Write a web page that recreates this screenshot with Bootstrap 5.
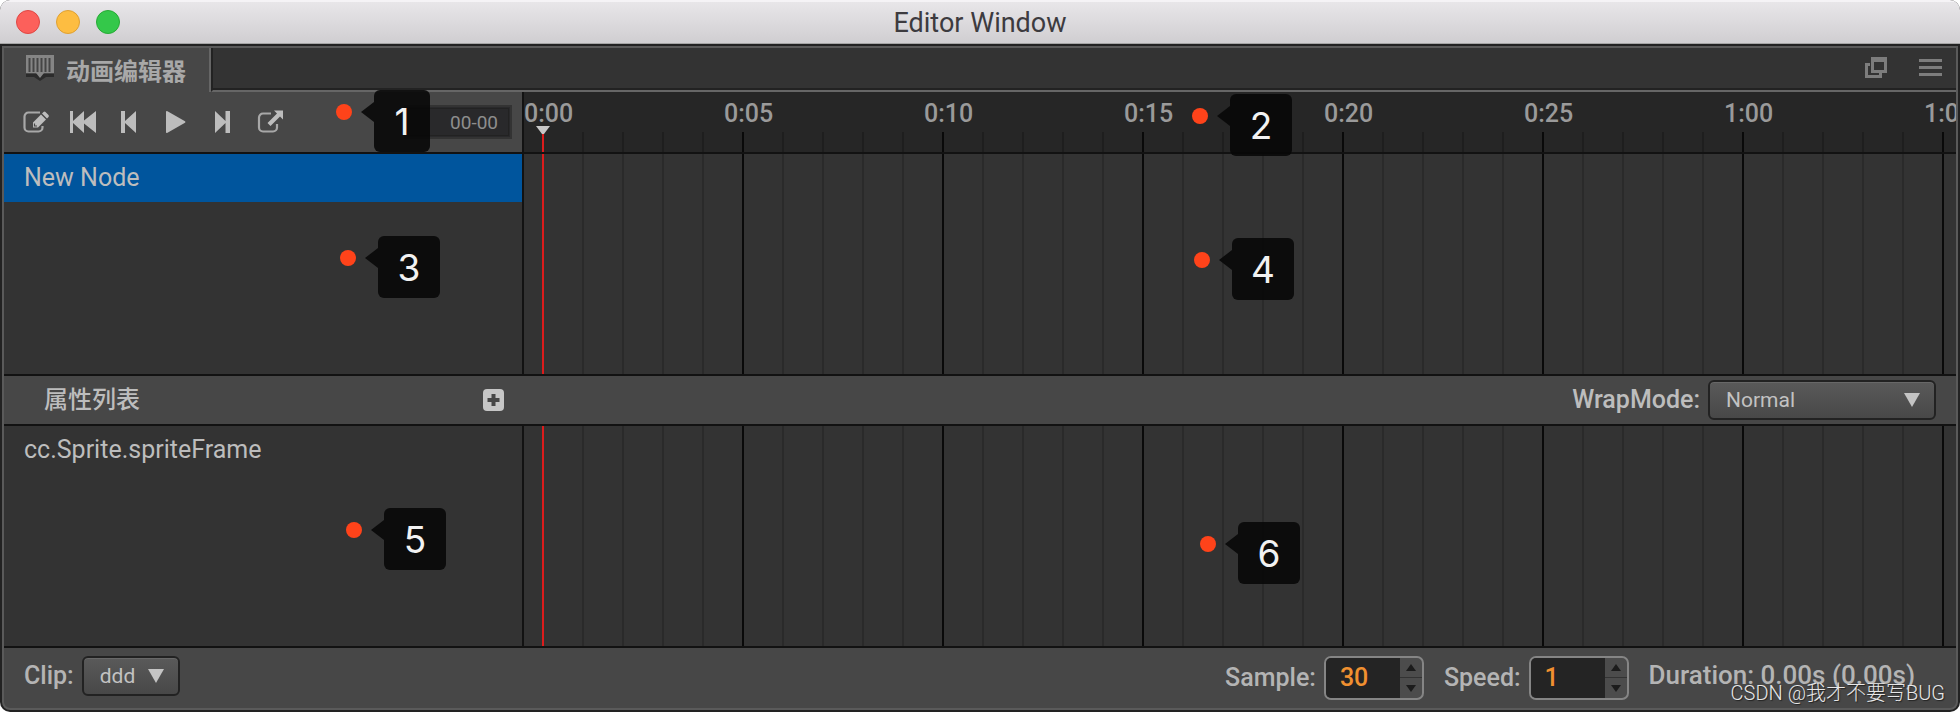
<!DOCTYPE html>
<html lang="zh-CN">
<head>
<meta charset="utf-8">
<meta name="viewport" content="width=device-width, initial-scale=1">
<title>Editor Window</title>
<link href="https://cdn.jsdelivr.net/npm/bootstrap@5.3.0/dist/css/bootstrap.min.css" rel="stylesheet">
<style>
  :root { --panel: #474747; --pane: #333; --ruler: #262626; --line: #121212; --edge: #5a5a5a; --ink: #bdbdbd; }
  body { font-family: Roboto, "Noto Sans CJK SC", sans-serif; font-size: 25px; line-height: 30px; color: var(--ink); background: #fff; }
  .window { min-height: 100vh; border-radius: 10px; overflow: hidden; background: #222; }
  .titlebar { height: 44px; background: linear-gradient(#e8e6e9, #d0ced1); border-top: 2px solid #f5f3f6; border-bottom: 1px solid #a5a5a5; color: #3d3b3f; font-size: 27px; }
  .lights { left: 16px; top: 8px; gap: 16px; }
  .lights button { width: 24px; height: 24px; padding: 0; border-radius: 50%; }
  .l-close { background: #fc605b; border: 1px solid #df4744; }
  .l-min { background: #fdbd41; border: 1px solid #dfa032; }
  .l-zoom { background: #34c84a; border: 1px solid #27aa35; }
  .frame { margin: 2px; border: 2px solid var(--edge); border-radius: 0 0 8px 8px; background: var(--panel); overflow: hidden; }
  .tabs { height: 44px; }
  .tab-on { width: 207px; padding-left: 22px; gap: 12px; border-right: 2px solid #666; font-size: 24px; line-height: 44px; font-weight: 700; color: #a8a8a8; }
  .tab-on svg { margin-bottom: 4px; }
  .tab-on span { padding-top: 4px; }
  .tab-rest { background: #333; border-left: 2px solid #222; border-bottom: 2px solid #666; box-shadow: inset 0 -2px #222; padding: 0 14px 2px; gap: 30px; }
  .ico { background: none; border: 0; padding: 0; color: inherit; display: flex; align-items: center; justify-content: center; }
  .side { width: 520px; flex: none; border-right: 2px solid var(--line); }
  .tools { height: 60px; padding: 0 10px 0 8px; }
  .tools .ico { width: 47px; height: 40px; }
  .frame-no { width: 108px; height: 34px; padding: 0 12px; border: 2px solid #333; outline: 1px solid #222; outline-offset: -4px; background: #29292b; color: #8e8e8e; font-size: 19px; text-align: right; }
  .ruler { background: var(--ruler); color: #9a9a9a; font-weight: 500; }
  .ruler .stamp { width: 200px; flex: none; padding-top: 7px; }
  .ticks, .ruler::after { background-image: linear-gradient(90deg, #090909 2px, transparent 2px), linear-gradient(90deg, #2a2a2a 2px, transparent 2px); background-size: 200px 100%, 40px 100%; background-position: 18px 0; }
  .ruler::after { content: ""; position: absolute; left: 0; right: 0; bottom: 0; height: 20px; background-image: linear-gradient(90deg, #090909 2px, transparent 2px), linear-gradient(90deg, #1e1e1e 2px, transparent 2px); }
  .rowline { border-bottom: 2px solid var(--line); }
  .pane { background: var(--pane); flex: 1 1 220px; }
  .item { height: 48px; padding: 0 20px; line-height: 48px; }
  .item.on { background: #00559d; }
  .head { position: absolute; left: 18px; top: 0; bottom: 0; width: 2px; background: #dc1c1c; }
  .head-cap { position: absolute; left: 12px; bottom: 0; z-index: 1; }
  .bar { height: 50px; }
  .bar-title { font-size: 24px; font-weight: 500; }
  .bar label { font-weight: 500; }
  .drop { height: 40px; padding: 0 16px; border: 2px solid #222; border-radius: 6px; appearance: none; color: #c2c2c2; font-size: 21px; background: url("data:image/svg+xml,%3Csvg xmlns='http://www.w3.org/2000/svg' width='16' height='14'%3E%3Cpath d='M0 0h16L8 14z' fill='%23c4c4c4'/%3E%3C/svg%3E") right 14px center no-repeat, linear-gradient(#5a5a5a, #484848); box-shadow: inset 0 1px #686868; }
  .drop-wrap { width: 228px; }
  .drop-clip { width: 98px; }
  .foot { height: 60px; padding: 8px 41px 8px 20px; }
  .foot label, .foot .len { font-weight: 500; color: #b4b4b4; }
  .foot .len { font-size: 26px; }
  .speed { margin-left: 12px; }
  .num { width: 100px; height: 44px; border: 2px solid #858585; border-radius: 7px; background: #4c4c4c; overflow: hidden; }
  .num input { width: 74px; border: 0; padding: 0 0 0 14px; background: #242424; color: #f09030; font-weight: 500; appearance: textfield; outline: 0; }
  .num input::-webkit-inner-spin-button { appearance: none; }
  .num .ico { height: 20px; width: 22px; color: #1c1c1c; }
  .num .ico:first-child { border-bottom: 1px solid #333; }
  .pin { position: absolute; z-index: 3; width: 16px; height: 16px; border-radius: 50%; background: #ff431a; }
  .pin b { position: absolute; left: 38px; top: -14px; width: 62px; height: 62px; border-radius: 6px; background: rgba(8,8,8,.9); color: #f2f2f2; font: 400 37px/64px Inter, sans-serif; text-align: center; }
  .pin b::before { content: ""; position: absolute; left: -13px; top: 12px; border: solid transparent; border-width: 10px 13px 10px 0; border-right-color: rgba(8,8,8,.9); }
  .pin .slim { width: 56px; }
  .p1 { left: 332px; top: 12px; } .p2 { left: 668px; top: 16px; }
  .p3 { left: 336px; top: 96px; } .p4 { left: 670px; top: 98px; }
  .p5 { left: 342px; top: 96px; } .p6 { left: 676px; top: 110px; }
  .credit { position: absolute; right: 15px; bottom: 4px; font: 300 20px/30px Roboto, "Noto Sans CJK SC", sans-serif; color: #e8e8e8; text-shadow: 1px 1px 1px #222; }
</style>
</head>
<body>
<div class="window d-flex flex-column position-relative">
  <header class="titlebar d-flex align-items-center justify-content-center position-relative">
    <div class="lights position-absolute d-flex">
      <button type="button" class="l-close" aria-label="Close"></button>
      <button type="button" class="l-min" aria-label="Minimize"></button>
      <button type="button" class="l-zoom" aria-label="Zoom"></button>
    </div>
    <span>Editor Window</span>
  </header>

  <main class="frame flex-grow-1 d-flex flex-column">
    <nav class="tabs d-flex">
      <div class="tab-on d-flex align-items-center">
        <svg width="28" height="26" viewBox="0 0 28 26"><path d="M0 19h28v3h-8l-6 4-6-4H0z" fill="#2b2b2b"/><path d="M0 0h28v18H18l-4 5-4-5H0z" fill="#858585"/><path d="M3.500 3v14M7.500 3v14M11.500 3v14M15.500 3v14M19.500 3v14M23.500 3v14" stroke="#454545" stroke-width="2"/></svg>
        <span>动画编辑器</span>
      </div>
      <div class="tab-rest flex-grow-1 d-flex align-items-center justify-content-end">
        <button type="button" class="ico" aria-label="Pop out"><svg width="24" height="22" viewBox="0 0 24 22" fill="none" stroke="#7d7d7d" stroke-width="3"><path d="M6 7.500H2.500v12h14V16"/><path d="M8.500 3.500h13v11h-13z"/><path d="M7 2.500h16" stroke-width="5"/></svg></button>
        <button type="button" class="ico" aria-label="Menu"><svg width="24" height="22" viewBox="0 0 24 22"><path d="M1 3.500h23M1 10.500h23M1 17.500h23" stroke="#7d7d7d" stroke-width="3"/></svg></button>
      </div>
    </nav>

    <section class="d-flex rowline">
      <div class="side tools d-flex align-items-center position-relative">
        <button type="button" class="ico" aria-label="Edit"><svg width="28" height="24" viewBox="0 0 28 24"><path d="M18 2.500H6.500a4 4 0 0 0-4 4v11a4 4 0 0 0 4 4h10a4 4 0 0 0 4-4V16" fill="none" stroke="#a8a8a8" stroke-width="2.200"/><path d="M11 17.500v-5l8-8 5 5-8 8zM20 3.500l1.500-1.500q1-.8 2 0l3 3q.8 1 0 2L25 8.500z" fill="#bdbdbd"/><path d="M12.500 13.500v2.500H15" fill="none" stroke="#474747" stroke-width="1.200"/></svg></button>
        <button type="button" class="ico" aria-label="First frame"><svg width="28" height="24" viewBox="0 0 28 24" fill="#bdbdbd"><path d="M1 1h3v10L15 1v9.500L27 1v22L15 13.500V23L4 13v10H1z"/></svg></button>
        <button type="button" class="ico" aria-label="Previous frame"><svg width="28" height="24" viewBox="0 0 28 24" fill="#bdbdbd"><path d="M5 1h4v10L20 1v22L9 13v10H5z"/></svg></button>
        <button type="button" class="ico" aria-label="Play"><svg width="28" height="24" viewBox="0 0 28 24" fill="#bdbdbd"><path d="M3 2q0-1.500 1.500-.7L22 11.300q1 .7 0 1.400L4.500 22.700Q3 23.500 3 22z"/></svg></button>
        <button type="button" class="ico" aria-label="Next frame"><svg width="28" height="24" viewBox="0 0 28 24" fill="#bdbdbd"><path d="M5 1l10.500 10V1H20v22h-4.500V13L5 23z"/></svg></button>
        <button type="button" class="ico" aria-label="Export"><svg width="28" height="24" viewBox="0 0 28 24"><path d="M14 3.500H6a4 4 0 0 0-4 4v10a4 4 0 0 0 4 4h10a4 4 0 0 0 4-4V14" fill="none" stroke="#a8a8a8" stroke-width="2.200"/><path d="M17 .5h9v9l-3-3L13.500 16l-3-3L20 3.500z" fill="#bdbdbd"/></svg></button>
        <input class="frame-no ms-auto" type="text" value="00-00" aria-label="Frame" readonly>
        <span class="pin p1"><b class="slim">1</b></span>
      </div>
      <div class="ruler flex-fill w-0 position-relative" style="width:0">
        <div class="d-flex overflow-hidden">
          <span class="stamp">0:00</span><span class="stamp">0:05</span><span class="stamp">0:10</span><span class="stamp">0:15</span><span class="stamp">0:20</span><span class="stamp">0:25</span><span class="stamp">1:00</span><span class="stamp">1:05</span>
        </div>
        <svg class="head-cap" width="14" height="26" viewBox="0 0 14 26"><path d="M6 7h2v19H6z" fill="#dc1c1c"/><path d="M0 0h14L8 8H6z" fill="#c8c8c8"/></svg>
        <span class="pin p2"><b>2</b></span>
      </div>
    </section>

    <section class="pane d-flex rowline">
      <div class="side position-relative">
        <div class="item on">New Node</div>
        <span class="pin p3"><b>3</b></span>
      </div>
      <div class="ticks flex-grow-1 position-relative"><i class="head"></i><span class="pin p4"><b>4</b></span></div>
    </section>

    <section class="bar rowline d-flex align-items-center justify-content-between">
      <div class="d-flex align-items-center justify-content-between ps-4" style="width:501px">
        <span class="bar-title ps-3">属性列表</span>
        <button type="button" class="ico" aria-label="Add property"><svg width="22" height="22" viewBox="0 0 22 22"><rect width="21" height="22" rx="4" fill="#c6c6c6"/><path d="M10.500 5v12M4.500 11h12" stroke="#474747" stroke-width="4"/></svg></button>
      </div>
      <div class="d-flex align-items-center gap-2 me-3 pe-1">
        <label for="wrap">WrapMode:</label>
        <select id="wrap" class="drop drop-wrap"><option>Normal</option></select>
      </div>
    </section>

    <section class="pane d-flex rowline">
      <div class="side position-relative">
        <div class="item">cc.Sprite.spriteFrame</div>
        <span class="pin p5"><b>5</b></span>
      </div>
      <div class="ticks flex-grow-1 position-relative"><i class="head"></i><span class="pin p6"><b>6</b></span></div>
    </section>

    <footer class="foot d-flex align-items-start">
      <div class="d-flex align-items-center gap-2">
        <label for="clip">Clip:</label>
        <select id="clip" class="drop drop-clip"><option>ddd</option></select>
      </div>
      <div class="d-flex align-items-center gap-2 ms-auto">
        <label for="sample">Sample:</label>
        <div class="num d-flex"><input id="sample" type="number" value="30">
          <div><button type="button" class="ico" aria-label="Sample up"><svg width="10" height="7"><path d="M0 7h10L5 0z" fill="#1c1c1c"/></svg></button><button type="button" class="ico" aria-label="Sample down"><svg width="10" height="7"><path d="M0 0h10L5 7z" fill="#1c1c1c"/></svg></button></div>
        </div>
        <label for="speed" class="speed">Speed:</label>
        <div class="num d-flex"><input id="speed" type="number" value="1">
          <div><button type="button" class="ico" aria-label="Speed up"><svg width="10" height="7"><path d="M0 7h10L5 0z" fill="#1c1c1c"/></svg></button><button type="button" class="ico" aria-label="Speed down"><svg width="10" height="7"><path d="M0 0h10L5 7z" fill="#1c1c1c"/></svg></button></div>
        </div>
      </div>
      <span class="len ps-3 ms-1 pt-1">Duration: 0.00s (0.00s)</span>
    </footer>
  </main>
  <div class="credit">CSDN @我才不要写BUG</div>
</div>
<script src="https://cdn.jsdelivr.net/npm/bootstrap@5.3.0/dist/js/bootstrap.bundle.min.js"></script>
</body>
</html>
